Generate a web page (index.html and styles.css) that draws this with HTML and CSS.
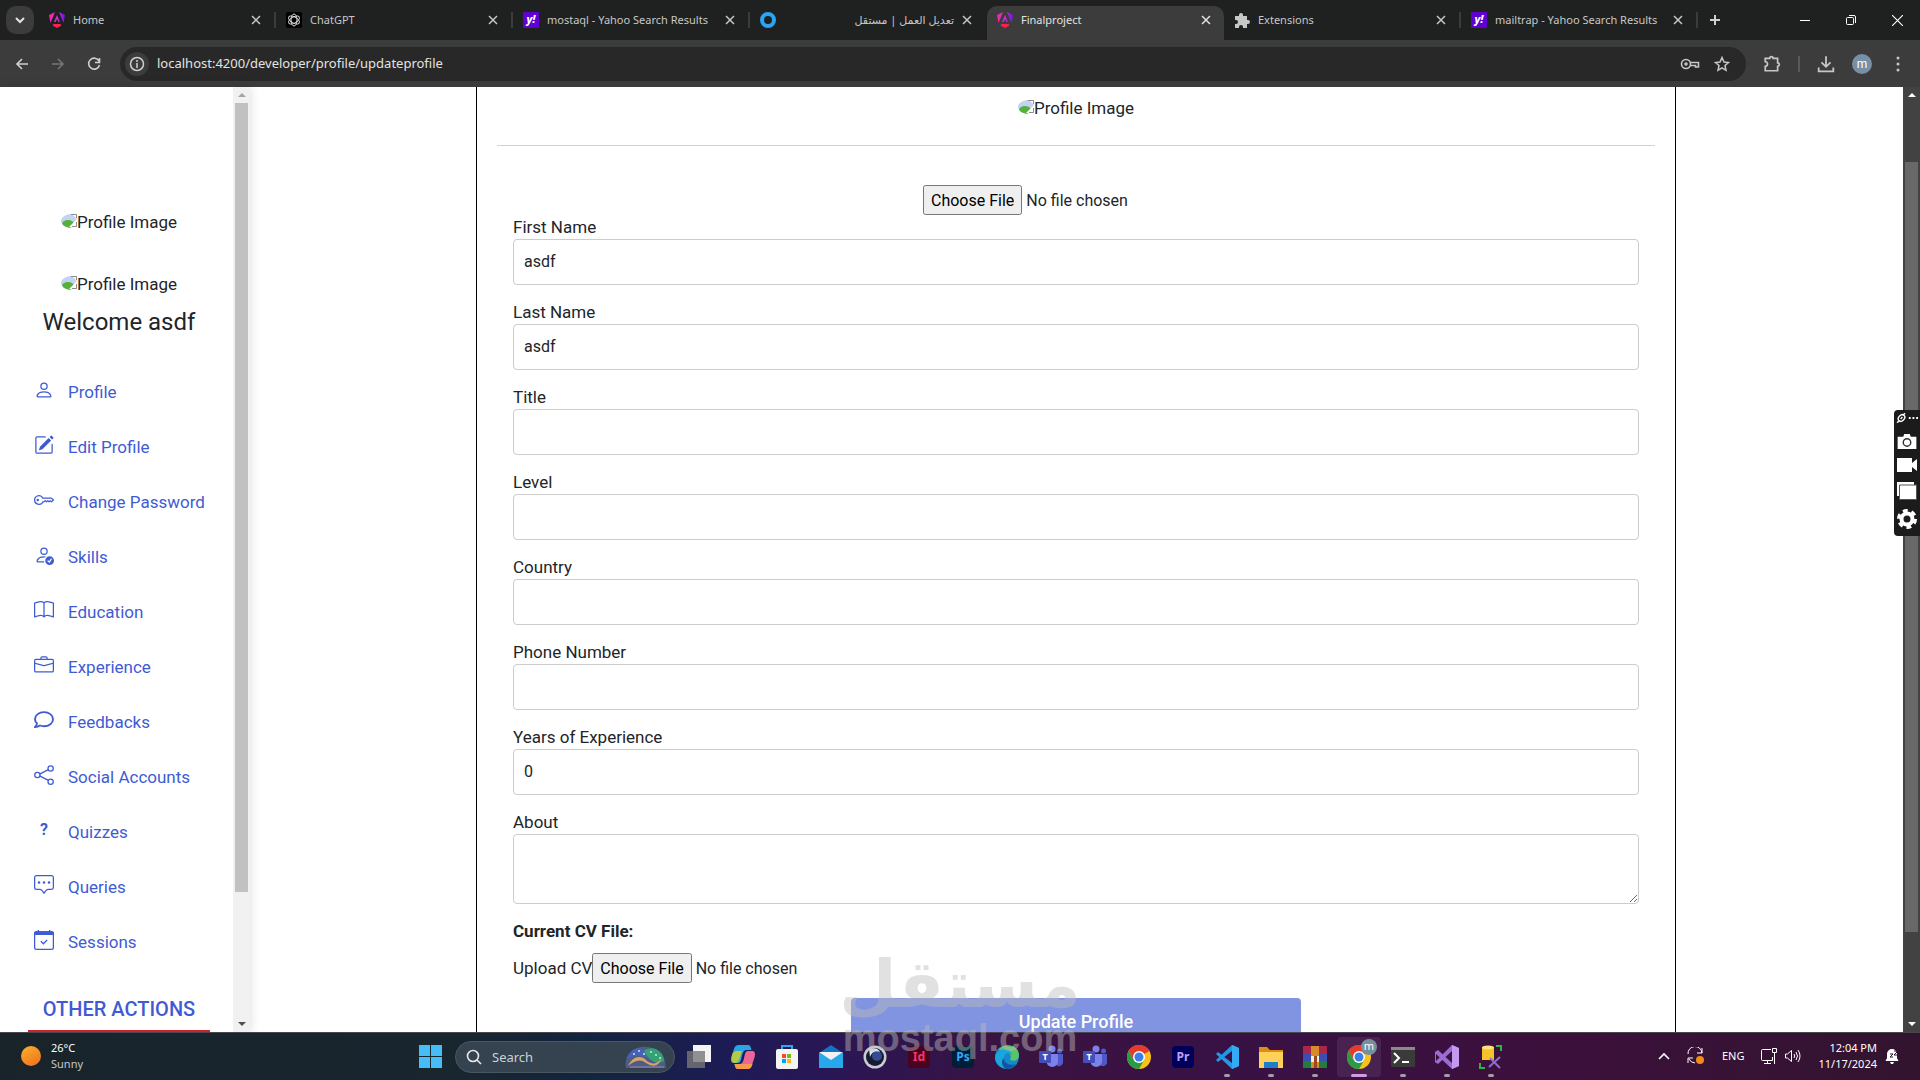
FILE: index.html
```html
<!DOCTYPE html>
<html lang="en">
<head>
<meta charset="UTF-8">
<title>Finalproject</title>
<link rel="stylesheet" href="styles.css">
</head>
<body>

<!-- shared icons -->
<svg class="defs" width="0" height="0">
	<symbol id="close" viewBox="0 0 10 10"><path d="M1 1l8 8M9 1l-8 8" fill="none" stroke="currentColor" stroke-width="1.5"/></symbol>
	<symbol id="angular" viewBox="0 0 16 16">
		<linearGradient id="ang" x1="0" y1="0" x2="1" y2="0"><stop offset="0" stop-color="#f42a9b"/><stop offset=".5" stop-color="#d42be0"/><stop offset="1" stop-color="#6a12e8"/></linearGradient>
		<path d="M0 3L6 0 1.500 11zM16 3L10 0l4.500 11zM8 3l3 7H9.500L8 7l-1.500 3H5z" fill="url(#ang)"/><path d="M4.500 12h7l1 1.500L8 16l-4.500-2.500z" fill="#ff2050"/>
	</symbol>
	<symbol id="broken" viewBox="0 0 16 16">
		<clipPath id="oval"><ellipse cx="16" cy="8" rx="16" ry="8"/></clipPath>
		<g clip-path="url(#oval)"><path d="M0 1h11l5 5v8H0z" fill="#c3d4f3"/><ellipse cx="7" cy="11" rx="6" ry="4" fill="#56b13c"/><path d="M8 14L16 6v8z" fill="#fff"/><path d="M11 13.500h4.500V9M10 1.500h5.500V5" fill="none" stroke="#8a8a8a"/></g>
	</symbol>
	<symbol id="chrome" viewBox="0 0 24 24">
		<circle cx="12" cy="12" r="12" fill="#fbc116"/><path d="M12 12L1.600 6A12 12 0 0 1 22.400 6z" fill="#e33b2e"/><path d="M12 6h10.400A12 12 0 0 0 1.600 6l5.200 9z" fill="#e33b2e"/><path d="M1.600 6A12 12 0 0 0 12 24l5.200-9-5.200 3-5.200-3z" fill="#2b9a47"/><circle cx="12" cy="12" r="6" fill="#fff"/><circle cx="12" cy="12" r="4.500" fill="#3c7fea"/>
	</symbol>
	<symbol id="teams" viewBox="0 0 24 24">
		<circle cx="13" cy="4" r="3.500" fill="#7b83eb"/><circle cx="20.500" cy="6" r="2.500" fill="#5059c9"/><path d="M16 9h8v7a4 4 0 0 1-8 2z" fill="#5059c9"/><path d="M8 9h11v8a6 6 0 0 1-11 2z" fill="#7b83eb"/><rect y="6" width="12" height="12" rx="1" fill="#454db8"/>
	</symbol>
</svg>

<!-- tabs -->
<div class="tabstrip">
	<button class="tab-search" aria-label="Search tabs"><svg width="10" height="10" viewBox="0 0 10 10"><path d="M1 3l4 4 4-4" fill="none" stroke="#e3e3e3" stroke-width="2"/></svg></button>
	<div class="tab"><svg class="fav"><use href="#angular"/></svg><span>Home</span><button aria-label="Close"><svg><use href="#close"/></svg></button></div>
	<div class="tab"><svg class="fav" viewBox="0 0 16 16"><rect width="16" height="16" rx="2" fill="#000"/><g fill="none" stroke="#ddd"><ellipse cx="8" cy="8" rx="3" ry="6"/><ellipse cx="8" cy="8" rx="3" ry="6" transform="rotate(60 8 8)"/><ellipse cx="8" cy="8" rx="3" ry="6" transform="rotate(120 8 8)"/></g></svg><span>ChatGPT</span><button aria-label="Close"><svg><use href="#close"/></svg></button></div>
	<div class="tab"><i class="fav yahoo">y!</i><span>mostaql - Yahoo Search Results</span><button aria-label="Close"><svg><use href="#close"/></svg></button></div>
	<div class="tab"><svg class="fav" viewBox="0 0 16 16"><circle cx="8" cy="8" r="6" fill="none" stroke="#2aa5f4" stroke-width="4"/></svg><span dir="rtl">تعديل العمل | مستقل</span><button aria-label="Close"><svg><use href="#close"/></svg></button></div>
	<div class="tab active"><svg class="fav"><use href="#angular"/></svg><span>Finalproject</span><button aria-label="Close"><svg><use href="#close"/></svg></button></div>
	<div class="tab"><svg class="fav" viewBox="0 0 16 16" fill="#c7c7c7"><path d="M1 4h4V3a2 2 0 0 1 4 0v1h4v4h1a2 2 0 0 1 0 4h-1v4H9v-1a2 2 0 0 0-4 0v1H1v-4h1a2 2 0 0 0 0-4H1z"/></svg><span>Extensions</span><button aria-label="Close"><svg><use href="#close"/></svg></button></div>
	<div class="tab"><i class="fav yahoo">y!</i><span>mailtrap - Yahoo Search Results</span><button aria-label="Close"><svg><use href="#close"/></svg></button></div>
	<button class="new-tab" aria-label="New tab"><svg width="12" height="12" viewBox="0 0 12 12"><path d="M6 1v10M1 6h10" stroke="#d0d0d0" stroke-width="2"/></svg></button>
	<div class="win-buttons">
		<button aria-label="Minimize"><svg width="10" height="10" viewBox="0 0 10 10"><path d="M0 5.500h10" stroke="#fff"/></svg></button>
		<button aria-label="Restore"><svg width="10" height="10" viewBox="0 0 10 10" fill="none" stroke="#fff"><rect x=".5" y="2.500" width="7" height="7" rx="1"/><path d="M3 .5h5a1.500 1.500 0 0 1 1.500 1.500v6"/></svg></button>
		<button aria-label="Close window"><svg width="11" height="11" viewBox="0 0 10 10"><path d="M0 0l10 10M10 0L0 10" stroke="#fff"/></svg></button>
	</div>
</div>

<!-- address bar -->
<div class="toolbar">
	<button aria-label="Back"><svg width="16" height="16" viewBox="0 0 16 16"><path d="M14 8H3M8 3L3 8l5 5" fill="none" stroke="#d0d0d0" stroke-width="1.600"/></svg></button>
	<button aria-label="Forward"><svg width="16" height="16" viewBox="0 0 16 16"><path d="M2 8h11M8 3l5 5-5 5" fill="none" stroke="#757575" stroke-width="1.600"/></svg></button>
	<button aria-label="Reload"><svg width="16" height="16" viewBox="0 0 16 16"><path d="M13 5a5.500 5.500 0 1 0 .5 4M13.500 2v4.500H9" fill="none" stroke="#d0d0d0" stroke-width="1.600"/></svg></button>
	<div class="omnibox">
		<button class="info" aria-label="Site information"><svg width="16" height="16" viewBox="0 0 16 16"><circle cx="8" cy="8" r="6.500" fill="none" stroke="#d0d0d0" stroke-width="1.500"/><path d="M8 7v5M8 4v2" stroke="#d0d0d0" stroke-width="1.500"/></svg></button>
		<input type="text" aria-label="Address" value="localhost:4200/developer/profile/updateprofile">
		<svg width="20" height="20" viewBox="0 0 20 20" fill="none" stroke="#c7c7c7" stroke-width="1.600"><circle cx="6" cy="10" r="4.500"/><circle cx="6" cy="10" r="1"/><path d="M10 8.500h8.500v4.500h-3v-1.500H10"/></svg>
		<svg width="16" height="16" viewBox="0 0 16 16" fill="none" stroke="#c7c7c7" stroke-width="1.500"><path d="M8 1.500l2 4.500 4.500.5-3.500 3 1 4.800-4-2.500-4 2.500 1-4.800-3.500-3L6 6z"/></svg>
	</div>
	<button aria-label="Extensions"><svg width="18" height="18" viewBox="0 0 16 16" fill="none" stroke="#c7c7c7" stroke-width="1.500"><path d="M2 3h4a1.500 1.500 0 0 1 3 0h4v4a1.500 1.500 0 0 1 0 3v4H2v-4a2 2 0 0 0 0-4z"/></svg></button>
	<i class="divider"></i>
	<button aria-label="Downloads"><svg width="18" height="18" viewBox="0 0 16 16" fill="none" stroke="#c7c7c7" stroke-width="1.600"><path d="M8 1v9M4 6.500l4 4 4-4M1.500 11v3.500h13V11"/></svg></button>
	<button class="avatar" aria-label="Account">m</button>
	<button aria-label="Menu"><svg width="4" height="16" viewBox="0 0 4 16" fill="#c7c7c7"><circle cx="2" cy="2" r="1.500"/><circle cx="2" cy="8" r="1.500"/><circle cx="2" cy="14" r="1.500"/></svg></button>
</div>

<!-- page -->
<div class="page">
	<div class="sidebar">
		<div class="side-content">
			<div class="side-img"><svg class="broken"><use href="#broken"/></svg>Profile Image</div>
			<div class="side-img"><svg class="broken"><use href="#broken"/></svg>Profile Image</div>
			<h2>Welcome asdf</h2>
			<nav>
				<a href="#"><svg viewBox="0 0 16 16"><path d="M8 8a3 3 0 1 0 0-6 3 3 0 0 0 0 6m2-3a2 2 0 1 1-4 0 2 2 0 0 1 4 0m4 8c0 1-1 1-1 1H3s-1 0-1-1 1-4 6-4 6 3 6 4m-1-.004c-.001-.246-.154-.986-.832-1.664C11.516 10.680 10.289 10 8 10s-3.516.68-4.168 1.332c-.678.678-.83 1.418-.832 1.664z"/></svg>Profile</a>
				<a href="#"><svg viewBox="0 0 16 16"><path d="M15.502 1.940a.5.5 0 0 1 0 .706L14.459 3.690l-2-2L13.502.646a.5.5 0 0 1 .707 0l1.293 1.293zm-1.750 2.456-2-2L4.939 9.210a.5.5 0 0 0-.121.196l-.805 2.414a.25.25 0 0 0 .316.316l2.414-.805a.5.5 0 0 0 .196-.12l6.813-6.814z"/><path d="M1 13.500A1.500 1.500 0 0 0 2.500 15h11a1.500 1.500 0 0 0 1.500-1.500v-6a.5.5 0 0 0-1 0v6a.5.5 0 0 1-.5.5h-11a.5.5 0 0 1-.5-.5v-11a.5.5 0 0 1 .5-.5H9a.5.5 0 0 0 0-1H2.500A1.500 1.500 0 0 0 1 2.500z"/></svg>Edit Profile</a>
				<a href="#"><svg viewBox="0 0 16 16"><path d="M0 8a4 4 0 0 1 7.465-2H14a.5.5 0 0 1 .354.146l1.500 1.500a.5.5 0 0 1 0 .708l-1.500 1.500a.5.5 0 0 1-.708 0L13 9.207l-.646.647a.5.5 0 0 1-.708 0L11 9.207l-.646.647a.5.5 0 0 1-.708 0L9 9.207l-.646.647A.5.5 0 0 1 8 10h-.535A4 4 0 0 1 0 8m4-3a3 3 0 1 0 2.712 4.285A.5.5 0 0 1 7.163 9h.63l.853-.854a.5.5 0 0 1 .708 0l.646.647.646-.647a.5.5 0 0 1 .708 0l.646.647.646-.647a.5.5 0 0 1 .708 0l.646.647.793-.793-1-1h-6.630a.5.5 0 0 1-.451-.285A3 3 0 0 0 4 5"/><path d="M4 8a1 1 0 1 1-2 0 1 1 0 0 1 2 0"/></svg>Change Password</a>
				<a href="#"><svg viewBox="0 0 16 16"><path d="M12.500 16a3.500 3.500 0 1 0 0-7 3.500 3.500 0 0 0 0 7m1.679-4.493-1.335 2.226a.75.75 0 0 1-1.174.144l-.774-.773a.5.5 0 0 1 .708-.708l.547.548 1.170-1.951a.5.5 0 1 1 .858.514M11 5a3 3 0 1 1-6 0 3 3 0 0 1 6 0M8 7a2 2 0 1 0 0-4 2 2 0 0 0 0 4"/><path d="M8.256 14a4.500 4.500 0 0 1-.229-1.004H3c.001-.246.154-.986.832-1.664C4.484 10.680 5.711 10 8 10q.39 0 .74.025c.226-.341.496-.65.804-.918Q8.844 9.002 8 9c-5 0-6 3-6 4s1 1 1 1z"/></svg>Skills</a>
				<a href="#"><svg viewBox="0 0 16 16"><path d="M1 2.828c.885-.37 2.154-.769 3.388-.893 1.330-.134 2.458.063 3.112.752v9.746c-.935-.53-2.120-.603-3.213-.493-1.180.12-2.370.461-3.287.811zm7.500-.141c.654-.689 1.782-.886 3.112-.752 1.234.124 2.503.523 3.388.893v9.923c-.918-.35-2.107-.692-3.287-.81-1.094-.111-2.278-.039-3.213.492zM8 1.783C7.015.936 5.587.81 4.287.94c-1.514.153-3.042.672-3.994 1.105A.5.5 0 0 0 0 2.500v11a.5.5 0 0 0 .707.455c.882-.4 2.303-.881 3.680-1.020 1.409-.142 2.590.087 3.223.877a.5.5 0 0 0 .78 0c.633-.79 1.814-1.019 3.222-.877 1.378.139 2.800.62 3.681 1.020A.5.5 0 0 0 16 13.500v-11a.5.5 0 0 0-.293-.455c-.952-.433-2.480-.952-3.994-1.105C10.413.809 8.985.936 8 1.783"/></svg>Education</a>
				<a href="#"><svg viewBox="0 0 16 16"><path d="M6.500 1A1.500 1.500 0 0 0 5 2.500V3H1.500A1.500 1.500 0 0 0 0 4.500v8A1.500 1.500 0 0 0 1.500 14h13a1.500 1.500 0 0 0 1.500-1.500v-8A1.500 1.500 0 0 0 14.500 3H11v-.5A1.500 1.500 0 0 0 9.500 1zm0 1h3a.5.5 0 0 1 .5.5V3H6v-.5a.5.5 0 0 1 .5-.5m1.886 6.914L15 7.151V12.500a.5.5 0 0 1-.5.5h-13a.5.5 0 0 1-.5-.5V7.150l6.614 1.764a1.500 1.500 0 0 0 .772 0M1.500 4h13a.5.5 0 0 1 .5.5v1.616L8.129 7.948a.5.5 0 0 1-.258 0L1 6.116V4.500a.5.5 0 0 1 .5-.5"/></svg>Experience</a>
				<a href="#"><svg viewBox="0 0 16 16"><path d="M8 1.700c4 0 7.200 2.400 7.200 5.600s-3.200 5.700-7.200 5.700c-1.200 0-2.200-.2-3.200-.6-1.200.9-2.500 1.300-4 1.300.9-.9 1.400-1.900 1.600-3C1.300 9.700.8 8.500.8 7.300c0-3.200 3.200-5.600 7.200-5.600z" fill="none" stroke="currentColor" stroke-width="1.500"/></svg>Feedbacks</a>
				<a href="#"><svg viewBox="0 0 16 16"><path d="M4.500 7.300l7-3.600M4.500 8.700l7 3.600" stroke="currentColor"/><g fill="none" stroke="currentColor"><circle cx="2.700" cy="8" r="2.100"/><circle cx="13.300" cy="2.700" r="2.100"/><circle cx="13.300" cy="13.300" r="2.100"/></g></svg>Social Accounts</a>
				<a href="#"><span class="qmark">?</span>Quizzes</a>
				<a href="#"><svg viewBox="0 0 16 16"><path d="M2 .5h12A1.500 1.500 0 0 1 15.500 2v8a1.500 1.500 0 0 1-1.500 1.500h-2.500c-1 0-1.500.5-2 1L8 14.500l-1.500-2c-.5-.5-1-1-2-1H2A1.500 1.500 0 0 1 .5 10V2A1.500 1.500 0 0 1 2 .5z" fill="none" stroke="currentColor"/><circle cx="4" cy="6" r="1"/><circle cx="8" cy="6" r="1"/><circle cx="12" cy="6" r="1"/></svg>Queries</a>
				<a href="#"><svg viewBox="0 0 16 16"><rect x=".5" y="1.500" width="15" height="14" rx="1.500" fill="none" stroke="currentColor"/><path d="M0 4V2.500A1.500 1.500 0 0 1 1.500 1H3V0h1v1h8V0h1v1h1.500A1.500 1.500 0 0 1 16 2.500V4z"/><path d="M5.500 9l2 2 3-3" fill="none" stroke="currentColor"/></svg>Sessions</a>
			</nav>
			<h3>OTHER ACTIONS</h3>
			<div class="red-line"></div>
		</div>
		<div class="scrollbar light"><i class="up"></i><i class="thumb"></i><i class="down"></i></div>
	</div>

	<main>
		<div class="card">
			<div class="card-img"><svg class="broken"><use href="#broken"/></svg>Profile Image</div>
			<hr>
			<form>
				<div class="photo"><input type="file" aria-label="Profile photo"></div>
				<div class="group"><label for="fname">First Name</label><input type="text" id="fname" value="asdf"></div>
				<div class="group"><label for="lname">Last Name</label><input type="text" id="lname" value="asdf"></div>
				<div class="group"><label for="title">Title</label><input type="text" id="title"></div>
				<div class="group"><label for="level">Level</label><input type="text" id="level"></div>
				<div class="group"><label for="country">Country</label><input type="text" id="country"></div>
				<div class="group"><label for="phone">Phone Number</label><input type="text" id="phone"></div>
				<div class="group"><label for="years">Years of Experience</label><input type="text" id="years" value="0"></div>
				<div class="group"><label for="about">About</label><textarea id="about"></textarea></div>
				<p class="cv">Current CV File:</p>
				<div class="upload"><label for="cv">Upload CV</label><input type="file" id="cv"></div>
				<button type="button" class="update">Update Profile</button>
			</form>
		</div>
	</main>
	<div class="scrollbar dark"><i class="up"></i><i class="thumb"></i><i class="down"></i></div>
</div>

<!-- capture tool -->
<div class="capture">
	<svg width="22" height="12" viewBox="0 0 24 12"><ellipse cx="6" cy="6" rx="4" ry="3" transform="rotate(-45 6 6)" fill="none" stroke="#fff" stroke-width="1.500"/><path d="M1 11l3-2M7 3l3-2M5 7l2-2" stroke="#fff" stroke-width="1.500"/><path d="M14 6h2M18 6h2M22 6h2" stroke="#fff" stroke-width="2"/></svg>
	<svg width="20" height="15" viewBox="0 0 20 16"><path d="M0 3h6l1-3h6l1 3h6v13H0z" fill="#fff"/><circle cx="10" cy="9" r="4" fill="none" stroke="#333" stroke-width="1.500"/></svg>
	<svg width="20" height="14" viewBox="0 0 20 14"><path d="M0 0h15v5l5-4v12l-5-4v5H0z" fill="#fff"/></svg>
	<svg width="20" height="18" viewBox="0 0 20 18"><path d="M0 0h17v14H0z" fill="#fff"/><path d="M2.500 3h17v14.500h-17z" fill="#fff" stroke="#555"/></svg>
	<svg width="20" height="20" viewBox="0 0 20 20"><circle cx="10" cy="10" r="5.500" fill="none" stroke="#fff" stroke-width="4"/><circle cx="10" cy="10" r="8.500" fill="none" stroke="#fff" stroke-width="3" stroke-dasharray="4.900 4" /></svg>
</div>

<!-- taskbar -->
<div class="taskbar">
	<div class="weather"><i class="sun"></i><div>26°C<br><span>Sunny</span></div></div>
	<div class="apps">
		<svg class="win" viewBox="0 0 24 24" fill="#45bdf7"><path d="M0 0h11.500v11.500H0zM12.500 0H24v11.500H12.500zM0 12.500h11.500V24H0zM12.500 12.500H24V24H12.500z"/></svg>
		<label class="search">
			<svg width="16" height="16" viewBox="0 0 16 16" fill="none" stroke="#e8e8e8" stroke-width="1.600"><circle cx="7" cy="7" r="5.500"/><path d="M11 11l4 4"/></svg>
			<input type="text" placeholder="Search" aria-label="Search">
			<svg width="44" height="24" viewBox="0 0 44 24"><path d="M2 23C-1 8 12 0 24 2s17 8 18 21z" fill="#4f5d86"/><path d="M3 14C7 1 20-1 24 13c-8-4-14-3-21 1z" fill="#4661b8"/><path d="M20 6c8-7 20 0 20 10-7 4-14 1-20-10z" fill="#35a276"/><path d="M4 21c5-11 14-11 19-5 5 4 10 3 14-2-2 8-9 8-15 4-6-5-12-2-18 3z" fill="#d4a468"/><path d="M6 22h34" stroke="#9a83c4"/><g fill="#cfe0f5"><circle cx="10" cy="9" r="1"/><circle cx="15" cy="6" r="1"/><circle cx="20" cy="9" r="1"/><circle cx="27" cy="7" r="1"/><circle cx="32" cy="10" r="1"/><circle cx="36" cy="13" r="1"/></g></svg>
		</label>
		<div class="app"><svg viewBox="0 0 24 24"><path d="M6 0h18v17H6z" fill="#f4f4f4"/><path d="M0 6h18v17H0z" fill="#777" opacity=".8"/></svg></div>
		<div class="app"><svg viewBox="0 0 24 24"><path d="M8 0h9c2 0 3 2 3.500 5h-5c-3 0-4 3-5 8s-2 5-5 5h-3C-.5 18-.5 14 1 10l2-6c1-3 2-4 5-4z" fill="#2ba5df"/><path d="M1 10c1-3 2-4 5-4h5c-2 5-2 12-7 12-4 0-4-4-3-8z" fill="#b1cb42"/><path d="M16 24H7c-2 0-3-2-3.500-5h5c3 0 4-3 5-8s2-5 5-5h3c3 0 3 4 1.500 8l-2 6c-1 3-2 4-5 4z" fill="#ec6798"/><path d="M16 24H7c-2 0-3-2-3.500-5h7c5 0 8 0 11 0-1 3-2 5-5.500 5z" fill="#f59a4b"/></svg></div>
		<div class="app"><svg viewBox="0 0 24 24"><path d="M7 5V1h10v4" fill="none" stroke="#2ea7e8" stroke-width="2"/><rect x="1" y="4" width="22" height="20" rx="2" fill="#f4f4f4"/><path d="M7 9h4v4H7z" fill="#f04e23"/><path d="M12 9h4v4h-4z" fill="#7fb900"/><path d="M7 14h4v4H7z" fill="#00a3ee"/><path d="M12 14h4v4h-4z" fill="#fdb813"/></svg></div>
		<div class="app"><svg viewBox="0 0 24 24"><path d="M0 8l12-8 12 8v15H0z" fill="#1474c4"/><path d="M1 7h22v8H1z" fill="#f2f2f2"/><path d="M0 7l12 8L24 7v16H0z" fill="#26a8ea"/></svg></div>
		<div class="app"><svg viewBox="0 0 24 24"><circle cx="12" cy="12" r="11.500" fill="#c9ccd1"/><circle cx="12" cy="12" r="9" fill="#151b30"/><circle cx="14" cy="11" r="5" fill="#354b94"/><path d="M6 4c5-2 10 0 11 3-5-2-8 0-10 5z" fill="#dde2ef"/></svg></div>
		<div class="app"><i class="adobe id">Id</i></div>
		<div class="app"><i class="adobe ps">Ps</i></div>
		<div class="app"><svg viewBox="0 0 24 24"><circle cx="12" cy="12" r="12" fill="#1688cf"/><path d="M3 5C10-3 24 0 24 10c0 5-5 7-9 5 3-6-3-10-12-10z" fill="#57c66a"/><path d="M1 9C5 2 16 3 17 10c-5-4-9 0-8 5 1 4 6 6 12 4-6 8-20 5-21-6z" fill="#1aa5dc"/><path d="M9 13c0 5 5 8 12 6-3 4-7 5-10 5-5-3-5-9-2-11z" fill="#13569f"/></svg></div>
		<div class="app"><svg><use href="#teams"/></svg><i class="teams-t">T</i></div>
		<div class="app"><svg><use href="#teams"/></svg><i class="teams-t">T</i></div>
		<div class="app"><svg><use href="#chrome"/></svg></div>
		<div class="app"><i class="adobe pr">Pr</i></div>
		<div class="app open"><svg viewBox="0 0 24 24"><path d="M17 0l7 3v18l-7 3L1 9l2-2 14 11V6L3 17l-2-2z" fill="#2397e4"/><path d="M17 0l7 3v18l-7 3z" fill="#33aaf2"/></svg></div>
		<div class="app open"><svg viewBox="0 0 24 24"><path d="M0 2h8l3 3h13v18H0z" fill="#dd8f13"/><path d="M0 7h24v16H0z" fill="#ffd159"/><path d="M5 23v-6h14v6z" fill="#1c7fcb"/></svg></div>
		<div class="app open"><svg viewBox="0 0 24 24"><path d="M0 1h24v7H0z" fill="#a92749"/><path d="M0 8h24v8H0z" fill="#3b4fae"/><path d="M0 16h24v7H0z" fill="#247b3e"/><path d="M8 1h8v22H8z" fill="#d68a28"/><path d="M8 11h8v6H8z" fill="#eee"/><path d="M11 11h3v12h-3z" fill="#9b4a1c"/></svg></div>
		<div class="app open current"><svg><use href="#chrome"/></svg><b>m</b></div>
		<div class="app open"><svg viewBox="0 0 24 24"><rect y="2" width="24" height="20" rx="1" fill="#3a3a3a"/><path d="M0 2h24v3H0z" fill="#8a8a8a"/><path d="M3 8l5 5-5 5M11 17h7" fill="none" stroke="#fff" stroke-width="2"/></svg></div>
		<div class="app open"><svg viewBox="0 0 24 24"><path d="M17 0l7 3v18l-7 3L1 9v9l-1-1V7l3-2 14 13V6L3 19l-3-2z" fill="#9a6cd4"/><path d="M17 0l7 3v18l-7 3z" fill="#c39af0"/></svg></div>
		<div class="app open"><svg viewBox="0 0 24 24"><path d="M3 2h12v13H3z" fill="#f5c32c"/><ellipse cx="9" cy="2.500" rx="6" ry="2" fill="#ffe17a"/><path d="M17 1h5v5M1 18v5h5" fill="none" stroke="#2fb344" stroke-width="2"/><path d="M10 22L21 12M11 13l10 10" stroke="#8a6dd0" stroke-width="2"/></svg></div>
	</div>
	<div class="tray">
		<svg width="12" height="8" viewBox="0 0 12 8"><path d="M1 7l5-5 5 5" fill="none" stroke="#fff" stroke-width="1.600"/></svg>
		<svg width="18" height="18" viewBox="0 0 18 18" fill="none" stroke="#fff"><path d="M1 7a7 7 0 0 1 14-1M15 1v5h-5M1 16v-5h5M2 12a7 7 0 0 0 6 4"/><circle cx="13" cy="13" r="4" fill="#ef8b17" stroke="none"/></svg>
		<span>ENG</span>
		<div class="net">
			<svg width="16" height="16" viewBox="0 0 16 16" fill="none" stroke="#fff"><path d="M10 1.500H1.500a1 1 0 0 0-1 1v9a1 1 0 0 0 1 1h10V9M6.500 12.500v3M3 15.500h7M11.500.5h4v4h-4zM13.500 5v11"/></svg>
			<svg width="16" height="14" viewBox="0 0 16 14" fill="none" stroke="#fff"><path d="M.5 5v4h2l4 3.500V1.500L2.500 5zM9 5q1.500 2 0 4M11 3q3 4 0 8M13 1q4 6 0 12"/></svg>
		</div>
		<div class="clock">12:04 PM<br>11/17/2024</div>
		<svg width="14" height="16" viewBox="0 0 14 16"><path d="M2 6a5 5 0 0 1 10 0v4l1.500 3H.5L2 10zM5 14h4l-1 2H6z" fill="#fff"/><path d="M5 6h3L5 9h3M9 3h4L9 7h4" fill="none" stroke="#301630"/></svg>
	</div>
</div>

<div class="watermark"><span dir="rtl" lang="ar">مستقل</span><span>mostaql.com</span></div>
</body>
</html>
```
FILE: styles.css
```css
* { box-sizing: border-box; }
body {
	margin: 0;
	height: 100vh;
	display: flex;
	flex-direction: column;
	overflow: hidden;
	position: relative;
	font-family: Roboto, sans-serif;
	font-size: 17px;
	line-height: 24px;
	color: #212529;
	background-color: white;
}
svg { flex: none; display: block; }
.defs { position: absolute; }
button { font-family: inherit; }

/* tabs */
.tabstrip {
	display: flex;
	align-items: center;
	height: 40px;
	padding-left: 6px;
	background-color: #1f2120;
	font-family: "Noto Sans", "DejaVu Sans", sans-serif;
	font-size: 11px;
	color: #c7c7c7;
}
.tabstrip button, .toolbar button {
	display: flex;
	align-items: center;
	justify-content: center;
	flex: none;
	border: none;
	padding: 0;
	background: none;
	color: inherit;
}
.tabstrip .tab-search {
	width: 28px;
	height: 28px;
	margin-right: 5px;
	border-radius: 10px;
	background-color: #3c3c3c;
}
.tab {
	display: flex;
	align-items: center;
	gap: 8px;
	flex: 0 1 237px;
	height: 16px;
	padding: 0 13px 0 10px;
	border-right: 2px solid #3c3c3c;
	white-space: nowrap;
}
.tab span { flex: 1; }
.fav { width: 16px; height: 16px; }
.yahoo {
	background-color: #5f01d1;
	color: white;
	font-size: 11px;
	line-height: 14px;
	font-weight: 800;
	text-align: center;
}
.tab button svg { width: 10px; height: 10px; }
.tab.active {
	height: 34px;
	margin-top: 6px;
	border-right: none;
	border-radius: 10px 10px 0 0;
	background-color: #3c3c3c;
	color: #e3e3e3;
	padding-bottom: 6px;
}
.tab:has(+ .active) { border-color: transparent; }
.tabstrip .new-tab { width: 34px; height: 28px; }
.win-buttons { display: flex; margin-left: auto; }
.win-buttons button { width: 46px; height: 40px; }

/* address bar */
.toolbar {
	display: flex;
	align-items: center;
	height: 47px;
	padding: 0 4px;
	background-color: #3c3c3c;
}
.toolbar button { width: 36px; height: 36px; }
.omnibox {
	display: flex;
	align-items: center;
	gap: 14px;
	flex: 1;
	height: 34px;
	margin: 0 8px;
	padding: 0 16px 0 5px;
	border-radius: 17px;
	background-color: #282828;
}
.omnibox .info {
	width: 24px;
	height: 24px;
	border-radius: 50%;
	background-color: #3c3c3c;
}
.omnibox input {
	flex: 1;
	border: none;
	padding: 0 0 2px;
	margin-left: -6px;
	background: none;
	color: #e3e3e3;
	font-family: "Noto Sans", sans-serif;
	font-size: 13px;
}
.divider { width: 2px; height: 16px; margin: 0 8px; background-color: #5a5a5a; }
.toolbar .avatar {
	width: 20px;
	height: 20px;
	margin: 0 8px;
	border-radius: 50%;
	background-color: #7890a5;
	color: white;
	font-size: 12px;
}

/* page */
.page { display: flex; flex: 1; min-height: 0; }
.sidebar {
	display: flex;
	width: 250px;
	overflow: hidden;
	box-shadow: 0 0 10px rgba(0,0,0,0.15);
}
.side-content { flex: 1; padding: 123px 23px 0 28px; }
.side-img {
	display: flex;
	justify-content: center;
	margin-bottom: 38px;
}
.broken { width: 16px; height: 16px; margin-top: 3px; }
.sidebar h2 {
	margin: -26px 0 44px;
	font-size: 24px;
	font-weight: 400;
	line-height: 28px;
	text-align: center;
}
.sidebar nav { display: flex; flex-direction: column; gap: 31px; }
.sidebar nav a {
	display: flex;
	align-items: center;
	gap: 14px;
	padding-left: 6px;
	color: #3f5bd4;
	text-decoration: none;
	white-space: nowrap;
}
.sidebar nav svg { width: 20px; height: 20px; fill: currentColor; margin-bottom: 4px; }
.qmark { width: 20px; margin-bottom: 4px; text-align: center; font-size: 16px; line-height: 20px; font-weight: 700; }
.sidebar h3 {
	margin: 43px 0 9px;
	color: #3f5bd4;
	font-size: 20px;
	font-weight: 500;
	text-align: center;
	white-space: nowrap;
}
.red-line { height: 2px; background-color: #c9252b; }

.scrollbar {
	display: flex;
	flex-direction: column;
	align-items: center;
	flex: none;
	width: 17px;
	background-color: #f1f1f1;
	color: #505050;
}
.scrollbar .thumb { width: 13px; background-color: #c1c1c1; margin-bottom: auto; }
.scrollbar .up { margin: 6px 0; border: 4px solid transparent; border-top: none; border-bottom-color: currentColor; }
.scrollbar .down { margin: 6px 0; border: 4px solid transparent; border-bottom: none; border-top-color: currentColor; }
.light .up { border-bottom-color: #a3a3a3; }
.light .thumb { height: 83.5%; }
.dark { background-color: #424242; color: white; }
.dark .thumb { height: 81.5%; margin-top: 59px; background-color: #686868; }

main { flex: 1; display: flex; justify-content: center; padding-right: 1px; overflow: hidden; }
.card {
	width: 1200px;
	height: 1000px;
	padding: 9px 20px;
	border: 1px solid black;
	border-width: 0 1px;
}
.card-img { display: flex; justify-content: center; }
.card hr { margin: 25px 0 39px; border: none; border-top: 1px solid #d3d3d3; }
form { padding: 0 16px; }
.photo { display: flex; justify-content: center; }
input[type=file] {
	width: 306px;
	height: 30px;
	font-family: inherit;
	font-size: 16px;
	line-height: 24px;
	color: #212529;
}
input[type=file]::file-selector-button {
	height: 30px;
	font-family: inherit;
	font-size: 16px;
}
.group { margin-bottom: 15px; }
.group label { display: block; }
.group input, .group textarea {
	display: block;
	width: 100%;
	height: 46px;
	padding: 9px 10px 11px;
	border: 1px solid #ccc;
	border-radius: 4px;
	font-family: inherit;
	font-size: 16px;
	color: #212529;
}
.group textarea { height: 70px; }
.cv { margin: 0 0 10px; font-weight: 700; }
.upload { display: flex; align-items: center; }
.update {
	display: block;
	width: 450px;
	height: 46px;
	margin: 15px auto 0;
	border: none;
	border-radius: 4px;
	background-color: #8094e1;
	color: white;
	font-size: 18px;
	font-weight: 500;
}

/* floating capture tool */
.capture {
	position: absolute;
	right: 0;
	top: 410px;
	display: flex;
	flex-direction: column;
	align-items: center;
	justify-content: space-between;
	width: 26px;
	height: 126px;
	padding: 2px 0 7px;
	border-radius: 4px 0 0 4px;
	background-color: #1b1b1b;
}

/* taskbar */
.taskbar {
	display: grid;
	grid-template-columns: 419px 1fr auto;
	align-items: center;
	height: 48px;
	border-top: 1px solid #4a4650;
	background: linear-gradient(90deg, #18242a 0, #18262f 24%, #122541 31%, #1e1b55 38%, #2b1654 44%, #3b1340 53%, #381245 62%, #3c103c 80%, #32142f 100%);
	color: white;
	font-family: "Noto Sans", sans-serif;
	font-size: 11px;
	line-height: 16px;
}
.weather { display: flex; align-items: center; gap: 10px; padding: 0 0 1px 21px; }
.weather span { color: #c4c8ca; }
.sun { width: 20px; height: 20px; border-radius: 50%; background: linear-gradient(150deg, #fbb22c, #ef6c1c); }
.apps { display: flex; align-items: center; }
.win { width: 23px; height: 23px; }
.search {
	display: flex;
	align-items: center;
	gap: 8px;
	width: 220px;
	height: 32px;
	margin: 0 2px 0 13px;
	padding: 0 6px 0 10px;
	border: 1px solid #4a5660;
	border-radius: 16px;
	background-color: #35424f;
}
.search input {
	flex: 1;
	min-width: 0;
	border: none;
	background: none;
	font-family: inherit;
	font-size: 13px;
}
.search input::placeholder { color: #cdd0d5; }
.app {
	position: relative;
	display: flex;
	align-items: center;
	justify-content: center;
	width: 44px;
	height: 40px;
}
.app svg { width: 24px; height: 24px; }
.teams-t {
	position: absolute;
	left: 10px;
	top: 13px;
	width: 12px;
	font-size: 9px;
	line-height: 14px;
	font-style: normal;
	font-weight: 700;
	text-align: center;
}
.adobe {
	width: 22px;
	height: 22px;
	border-radius: 4px;
	font-size: 12px;
	line-height: 22px;
	font-style: normal;
	font-weight: 700;
	text-align: center;
}
.id { background-color: #49021f; color: #ff3366; }
.ps { background-color: #001e36; color: #31a8ff; }
.pr { background-color: #00005b; color: #b9a0ff; }
.open::after {
	content: "";
	position: absolute;
	bottom: 0;
	width: 6px;
	height: 3px;
	border-radius: 2px;
	background-color: #a79aab;
}
.current { border-radius: 4px; background-color: rgba(255,255,255,0.08); }
.current::after { width: 16px; background-color: #d29ae0; }
.current b {
	position: absolute;
	top: 2px;
	right: 4px;
	width: 16px;
	height: 16px;
	border-radius: 50%;
	background-color: #78909c;
	font-weight: 400;
	line-height: 14px;
	text-align: center;
}
.tray { display: flex; align-items: center; gap: 17px; padding: 0 21px 1px 0; }
.net { display: flex; align-items: center; gap: 8px; }
.clock { text-align: right; }
.tray .clock + svg { margin-left: -9px; }

.watermark {
	position: absolute;
	left: 845px;
	bottom: 22px;
	width: 230px;
	display: flex;
	flex-direction: column;
	align-items: center;
	opacity: 0.45;
	color: #bdbdbd;
	font-family: "Liberation Sans", "DejaVu Sans", sans-serif;
	font-size: 38px;
	line-height: 40px;
	font-weight: 700;
	pointer-events: none;
}
.watermark span:first-child { font-family: "DejaVu Sans", sans-serif; font-size: 66px; line-height: 66px; }
```
